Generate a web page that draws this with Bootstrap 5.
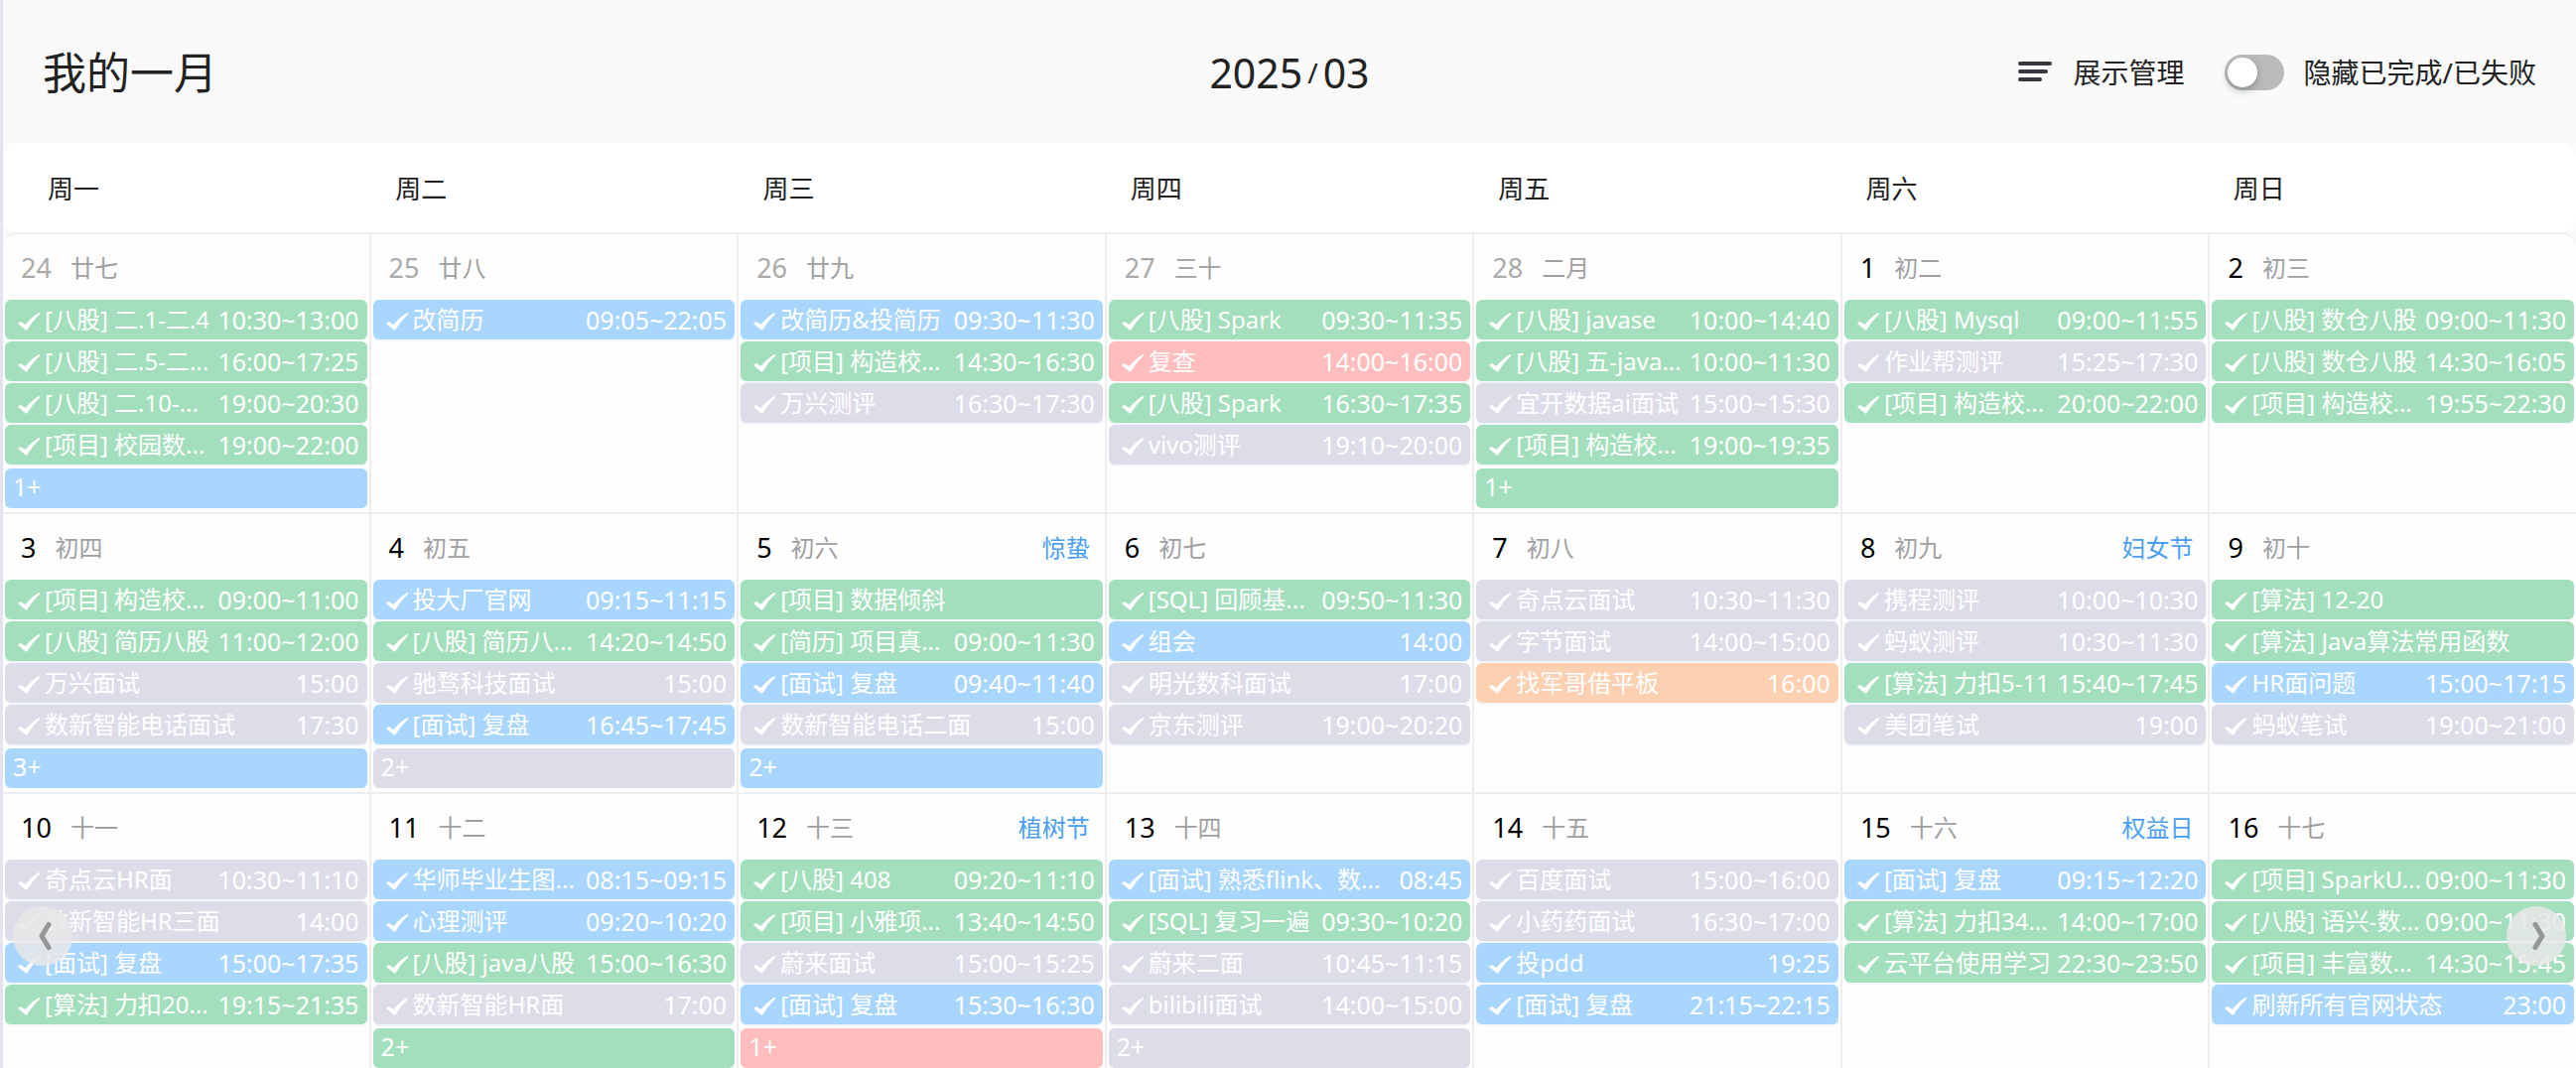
<!DOCTYPE html>
<html lang="zh-CN">
<head>
<meta charset="utf-8">
<meta name="viewport" content="width=device-width, initial-scale=1">
<title>我的一月</title>
<link href="https://cdn.jsdelivr.net/npm/bootstrap@5.3.0/dist/css/bootstrap.min.css" rel="stylesheet">
<style>
  :root { --line: #eeeeee; --page: #fafafa; }
  body { font-family: "Noto Sans", "Noto Sans CJK SC", sans-serif; color: #222; background: #e4e3f0; }
  .planner { height: 100vh; margin-left: 3px; background: var(--page); }
  .topbar { height: 144px; padding: 2px 40px 0; }
  .topbar > * { flex: 1 1 0; }
  .page-title { font-size: 44px; line-height: 60px; font-weight: 400; }
  .month-label { font-size: 41px; line-height: 60px; gap: 5px; }
  .month-label .slash { font-size: 28px; }
  .tools { font-size: 28px; line-height: 40px; gap: 40px; }
  .tool-btn { gap: 20px; font-size: 28px; line-height: 40px; color: #222; }
  .tool-btn svg { width: 38px; height: 28px; }
  .switch-label { gap: 20px; }
  .toggle { appearance: none; width: 60px; height: 36px; border-radius: 18px; background: #bbbbbb; margin: 0; padding: 3px; display: flex; align-items: center; }
  .toggle::before { content: ""; width: 30px; height: 30px; border-radius: 50%; background: #fff; box-shadow: 0 4px 8px rgba(0, 35, 11, .25); }
  .toggle:checked { background: #4a9ff5; justify-content: flex-end; }
  .weekdays { height: 90px; padding-top: 2px; background: #fff; border-radius: 14px; font-size: 26px; }
  .weekdays > div { text-indent: 25px; }
  .weekdays > div:first-child { text-indent: 45px; }
  .weeks { border-top: 2px solid var(--line); background: #fefefe; border-radius: 14px 14px 0 0; }
  .week { border-bottom: 2px solid var(--line); }
  .day { flex: 1 1 0; min-width: 0; min-height: 280px; padding: 0 2px 4px; border-right: 2px solid var(--line); }
  .day:last-child { border-right: 0; }
  .day-head { height: 66px; padding: 2px 13px 0 16px; gap: 19px; font-size: 24px; color: #a0a0a2; }
  .day-num { font-size: 27px; color: #000; }
  .outside .day-num { color: #aaaaaa; }
  .festival { color: #4a9ff5; }
  .task { height: 40px; line-height: 40px; margin-bottom: 2px; padding: 0 8px 0 12px; border-radius: 6px; font-size: 24px; color: #fff; box-shadow: 0 2px 0 #f3f7fd; }
  .task svg { width: 24px; height: 20px; margin: 3px 4px 0 0; }
  .task-time { font-size: 25px; }
  .more-btn { width: 100%; height: 40px; line-height: 36px; margin-top: 4px; padding: 0 8px 4px; border: 0; border-radius: 6px; font-size: 25px; color: #fff; text-align: left; }
  .c-green { background: #a4dfbd; }
  .c-blue { background: #a9d6ff; }
  .c-grey { background: #dddce9; }
  .c-red { background: #ffbdbd; }
  .c-orange { background: #fcd0b1; }
  .pager { position: absolute; bottom: 103px; width: 60px; height: 60px; padding: 0; border: 0; border-radius: 50%; background: rgba(232, 232, 232, .85); z-index: 2; }
  .pager svg { width: 60px; height: 60px; display: block; }
  .pager-prev { left: 10px; }
  .pager-next { right: 10px; }
</style>
<script src="https://cdn.jsdelivr.net/npm/bootstrap@5.3.0/dist/js/bootstrap.bundle.min.js"></script>
</head>
<body class="overflow-hidden">
<main class="planner position-relative overflow-hidden">
  <header class="topbar d-flex align-items-center">
    <h1 class="page-title m-0">我的一月</h1>
    <div class="month-label d-flex align-items-center justify-content-center"><span>2025</span><span class="slash">/</span><span>03</span></div>
    <div class="tools d-flex align-items-center justify-content-end text-nowrap">
      <button type="button" class="tool-btn btn p-0 border-0 d-flex align-items-center">
        <svg viewBox="0 0 38 28" fill="none" stroke="#36363f" stroke-width="4" stroke-linecap="round" aria-hidden="true"><path d="M4 5h30M4 13h26M4 21h20"/></svg>
        展示管理
      </button>
      <label class="switch-label d-flex align-items-center" for="hideDone">
        <input class="toggle" type="checkbox" role="switch" id="hideDone">
        隐藏已完成/已失败
      </label>
    </div>
  </header>
  <div class="weekdays row g-0 align-items-center">
    <div class="col">周一</div><div class="col">周二</div><div class="col">周三</div><div class="col">周四</div><div class="col">周五</div><div class="col">周六</div><div class="col">周日</div>
  </div>
  <div class="weeks" id="weeks"></div>
  <button type="button" class="pager pager-prev" aria-label="上个月"><svg viewBox="0 0 60 60" fill="none" stroke="#969696" stroke-width="5" stroke-linecap="round" stroke-linejoin="round"><path d="M36 18.500L29 30L36 41.500"/></svg></button>
  <button type="button" class="pager pager-next" aria-label="下个月"><svg viewBox="0 0 60 60" fill="none" stroke="#969696" stroke-width="5" stroke-linecap="round" stroke-linejoin="round"><path d="M29 18.500L36 30L29 41.500"/></svg></button>
</main>
<script>
// Each day: number, lunar label, festival, tasks ("colour|title|time"), overflow ("colour|label").
const colours = { g: 'c-green', b: 'c-blue', p: 'c-grey', r: 'c-red', o: 'c-orange' };
const weeks = [
  [
    [24, '廿七', '', ['g|[八股] 二.1-二.4|10:30~13:00', 'g|[八股] 二.5-二...|16:00~17:25', 'g|[八股] 二.10-...|19:00~20:30', 'g|[项目] 校园数...|19:00~22:00'], 'b|1+'],
    [25, '廿八', '', ['b|改简历|09:05~22:05']],
    [26, '廿九', '', ['b|改简历&投简历|09:30~11:30', 'g|[项目] 构造校...|14:30~16:30', 'p|万兴测评|16:30~17:30']],
    [27, '三十', '', ['g|[八股] Spark|09:30~11:35', 'r|复查|14:00~16:00', 'g|[八股] Spark|16:30~17:35', 'p|vivo测评|19:10~20:00']],
    [28, '二月', '', ['g|[八股] javase|10:00~14:40', 'g|[八股] 五-java...|10:00~11:30', 'p|宜开数据ai面试|15:00~15:30', 'g|[项目] 构造校...|19:00~19:35'], 'g|1+'],
    [1, '初二', '', ['g|[八股] Mysql|09:00~11:55', 'p|作业帮测评|15:25~17:30', 'g|[项目] 构造校...|20:00~22:00']],
    [2, '初三', '', ['g|[八股] 数仓八股|09:00~11:30', 'g|[八股] 数仓八股|14:30~16:05', 'g|[项目] 构造校...|19:55~22:30']]
  ],
  [
    [3, '初四', '', ['g|[项目] 构造校...|09:00~11:00', 'g|[八股] 简历八股|11:00~12:00', 'p|万兴面试|15:00', 'p|数新智能电话面试|17:30'], 'b|3+'],
    [4, '初五', '', ['b|投大厂官网|09:15~11:15', 'g|[八股] 简历八...|14:20~14:50', 'p|驰骛科技面试|15:00', 'b|[面试] 复盘|16:45~17:45'], 'p|2+'],
    [5, '初六', '惊蛰', ['g|[项目] 数据倾斜|', 'g|[简历] 项目真...|09:00~11:30', 'b|[面试] 复盘|09:40~11:40', 'p|数新智能电话二面|15:00'], 'b|2+'],
    [6, '初七', '', ['g|[SQL] 回顾基...|09:50~11:30', 'b|组会|14:00', 'p|明光数科面试|17:00', 'p|京东测评|19:00~20:20']],
    [7, '初八', '', ['p|奇点云面试|10:30~11:30', 'p|字节面试|14:00~15:00', 'o|找军哥借平板|16:00']],
    [8, '初九', '妇女节', ['p|携程测评|10:00~10:30', 'p|蚂蚁测评|10:30~11:30', 'g|[算法] 力扣5-11|15:40~17:45', 'p|美团笔试|19:00']],
    [9, '初十', '', ['g|[算法] 12-20|', 'g|[算法] Java算法常用函数|', 'b|HR面问题|15:00~17:15', 'p|蚂蚁笔试|19:00~21:00']]
  ],
  [
    [10, '十一', '', ['p|奇点云HR面|10:30~11:10', 'p|数新智能HR三面|14:00', 'b|[面试] 复盘|15:00~17:35', 'g|[算法] 力扣20...|19:15~21:35']],
    [11, '十二', '', ['b|华师毕业生图...|08:15~09:15', 'b|心理测评|09:20~10:20', 'g|[八股] java八股|15:00~16:30', 'p|数新智能HR面|17:00'], 'g|2+'],
    [12, '十三', '植树节', ['g|[八股] 408|09:20~11:10', 'g|[项目] 小雅项...|13:40~14:50', 'p|蔚来面试|15:00~15:25', 'b|[面试] 复盘|15:30~16:30'], 'r|1+'],
    [13, '十四', '', ['b|[面试] 熟悉flink、数...|08:45', 'g|[SQL] 复习一遍|09:30~10:20', 'p|蔚来二面|10:45~11:15', 'p|bilibili面试|14:00~15:00'], 'p|2+'],
    [14, '十五', '', ['p|百度面试|15:00~16:00', 'p|小药药面试|16:30~17:00', 'b|投pdd|19:25', 'b|[面试] 复盘|21:15~22:15']],
    [15, '十六', '权益日', ['b|[面试] 复盘|09:15~12:20', 'g|[算法] 力扣34...|14:00~17:00', 'g|云平台使用学习|22:30~23:50']],
    [16, '十七', '', ['g|[项目] SparkU...|09:00~11:30', 'g|[八股] 语兴-数...|09:00~11:30', 'g|[项目] 丰富数...|14:30~15:45', 'b|刷新所有官网状态|23:00']]
  ]
];
const check = '<svg class="flex-shrink-0" viewBox="0 0 24 20" fill="#fff" aria-hidden="true"><path d="M1 12Q2.500 9.500 4.500 10.500L8.500 13Q15 5 22 1.200Q23.800 .8 23 2.500Q16 9 10.500 18Q9.500 19.500 8.300 18Z"/></svg>';
const esc = s => s.replace(/&/g, '&amp;');
const task = t => {
  const [c, title, time] = t.split('|');
  return `<li class="task d-flex align-items-center text-nowrap ${colours[c]}">${check}<span class="flex-grow-1">${esc(title)}</span><span class="task-time">${time}</span></li>`;
};
const more = m => {
  const [c, label] = m.split('|');
  return `<button type="button" class="more-btn d-block ${colours[c]}">${label}</button>`;
};
document.getElementById('weeks').innerHTML = weeks.map((week, w) =>
  '<div class="week d-flex">' + week.map(([n, lunar, fest, tasks, extra]) =>
    `<section class="day${w === 0 && n > 20 ? ' outside' : ''}">
      <div class="day-head d-flex align-items-center"><span class="day-num">${n}</span><span>${lunar}</span>${fest ? `<span class="festival ms-auto">${fest}</span>` : ''}</div>
      <ul class="list-unstyled m-0">${tasks.map(task).join('')}</ul>${extra ? more(extra) : ''}
    </section>`).join('') + '</div>').join('');
</script>
</body>
</html>
